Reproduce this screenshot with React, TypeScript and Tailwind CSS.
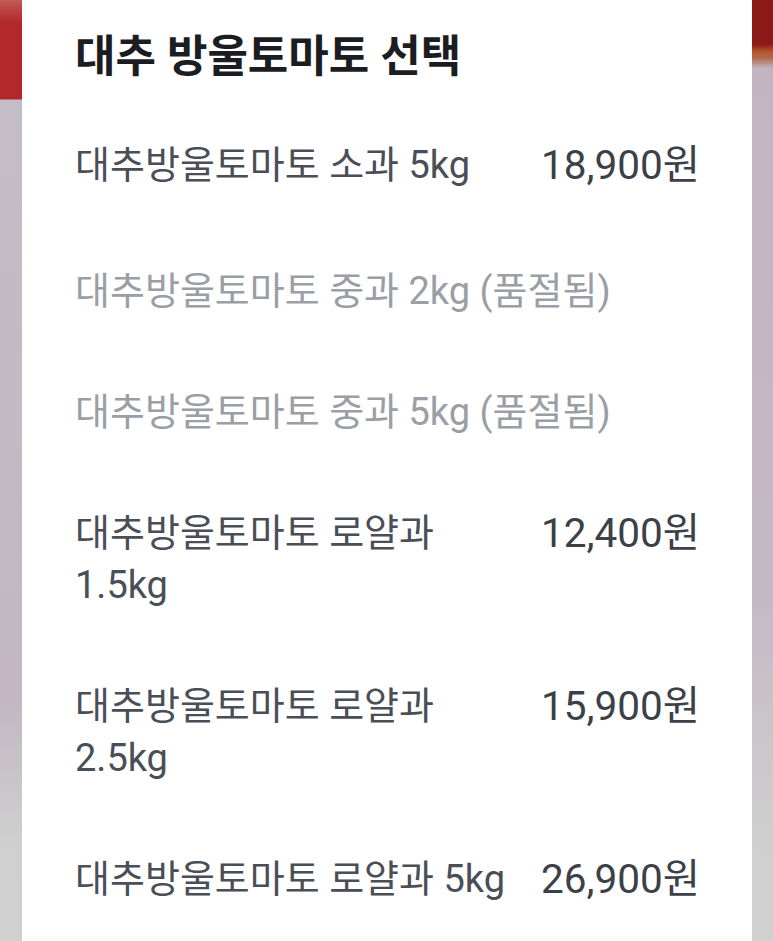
const FONT = '"Roboto", "Noto Sans CJK KR", sans-serif';

type Option = {
  name: string;
  price?: string;
  soldOut?: boolean;
};

const OPTIONS: Option[] = [
  { name: "대추방울토마토 소과 5kg", price: "18,900원" },
  { name: "대추방울토마토 중과 2kg (품절됨)", soldOut: true },
  { name: "대추방울토마토 중과 5kg (품절됨)", soldOut: true },
  { name: "대추방울토마토 로얄과 1.5kg", price: "12,400원" },
  { name: "대추방울토마토 로얄과 2.5kg", price: "15,900원" },
  { name: "대추방울토마토 로얄과 5kg", price: "26,900원" },
];

function OptionRow({ option, first }: { option: Option; first: boolean }) {
  return (
    <div
      className={`flex items-start justify-between gap-6 pt-[34px] ${
        first ? "pb-[40px]" : "pb-[35px]"
      }`}
    >
      <span
        className={`min-w-0 flex-1 break-keep text-[38px] leading-[52px] ${
          option.soldOut ? "text-[#9a9ea5]" : "text-[#4a4e56]"
        }`}
      >
        {option.name}
      </span>
      {option.price && (
        <span className="shrink-0 text-[40.5px] leading-[52px] text-[#3c4048]">
          {option.price}
        </span>
      )}
    </div>
  );
}

export default function App() {
  return (
    <div className="flex h-[941px] w-full overflow-hidden" style={{ fontFamily: FONT }}>
      {/* blurred backdrop, left edge */}
      <div className="w-[22px] shrink-0 bg-[linear-gradient(to_bottom,#c25a55_0px,#b3282a_22px,#b3282a_99px,#c4bcc6_100px,#c2b7c2_700px,#cfcfcf_840px,#d0d0d0_100%)]" />

      <div className="flex-1 bg-white pl-[53px] pr-[52px]">
        <h2 className="pt-[31px] text-[44px] font-bold leading-[52px] text-[#1b1d22]">
          대추 방울토마토 선택
        </h2>
        <div className="pt-[22px]">
          {OPTIONS.map((o, i) => (
            <OptionRow key={o.name} option={o} first={i === 0} />
          ))}
        </div>
      </div>

      {/* blurred backdrop, right edge */}
      <div className="w-[21px] shrink-0 bg-[linear-gradient(to_bottom,#8c1818_0px,#8c1818_44px,#b3582c_52px,#b06a50_58px,#c2b4c0_68px,#c4bac4_600px,#cfcfcf_840px,#d0d0d0_100%)]" />
    </div>
  );
}
